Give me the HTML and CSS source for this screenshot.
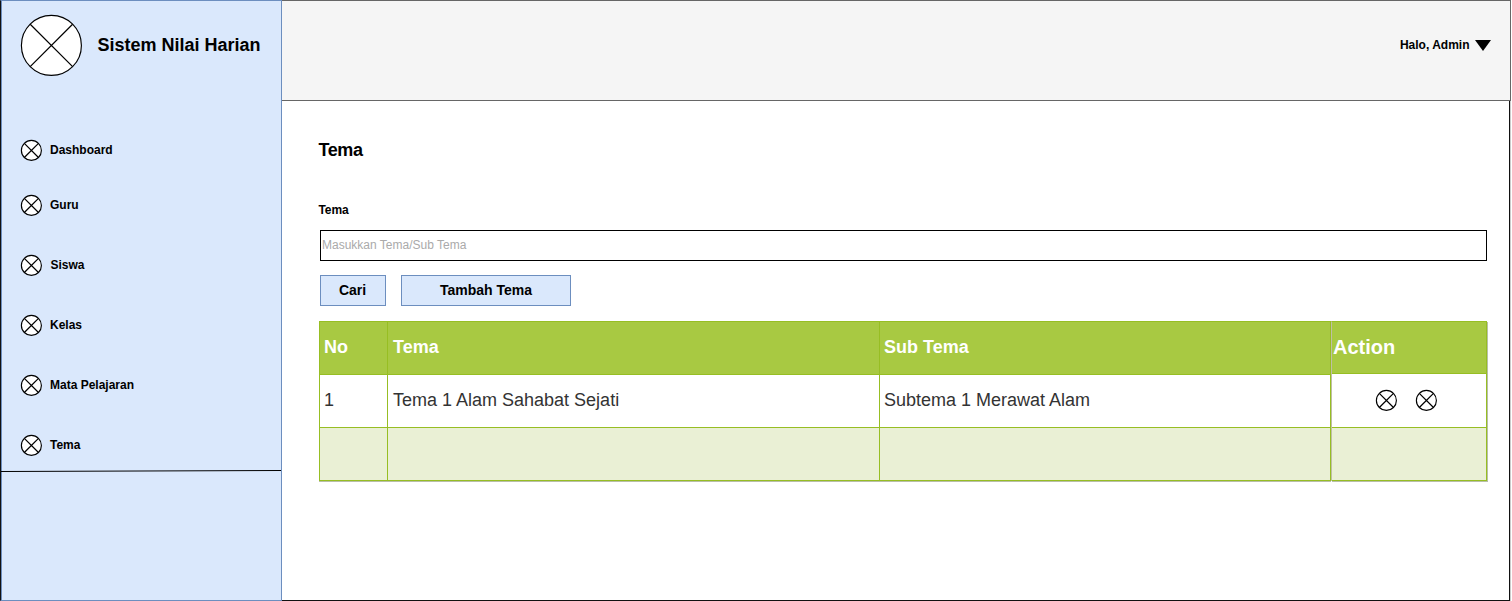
FILE: index.html
```html
<!DOCTYPE html>
<html lang="id">
<head>
<meta charset="utf-8">
<title>Sistem Nilai Harian</title>
<link rel="stylesheet" href="styles.css">
</head>
<body>
<svg class="defs" width="0" height="0">
  <symbol id="cross" viewBox="0 0 22 22">
    <circle cx="11.4" cy="11.4" r="10" fill="#fff" stroke="#000" stroke-width="1.15"/>
    <path d="M4.33 4.33 18.47 18.47M18.47 4.33 4.33 18.47" stroke="#000" stroke-width="1.25"/>
  </symbol>
</svg>
<div class="app">
  <aside class="sidebar">
    <div class="brand">
      <svg class="logo" viewBox="0 0 62 62"><circle cx="31.4" cy="31.4" r="30" fill="#fff" stroke="#000" stroke-width="1.15"/><path d="M10.2 10.2 52.6 52.6M52.6 10.2 10.2 52.6" stroke="#000" stroke-width="1.25"/></svg>
      <span>Sistem Nilai Harian</span>
    </div>
    <nav class="menu">
      <a class="item first"><svg class="icon"><use href="#cross"/></svg><span>Dashboard</span></a>
      <a class="item"><svg class="icon"><use href="#cross"/></svg><span>Guru</span></a>
      <a class="item siswa"><svg class="icon"><use href="#cross"/></svg><span>Siswa</span></a>
      <a class="item"><svg class="icon"><use href="#cross"/></svg><span>Kelas</span></a>
      <a class="item"><svg class="icon"><use href="#cross"/></svg><span>Mata Pelajaran</span></a>
      <a class="item"><svg class="icon"><use href="#cross"/></svg><span>Tema</span></a>
    </nav>
    <svg class="rule" viewBox="0 0 280 2"><path d="M0 1.5 280 .5" stroke="#000"/></svg>
  </aside>
  <div class="page">
    <header class="topbar">
      <span>Halo, Admin</span>
      <svg class="caret" viewBox="0 0 16 11"><path d="M0 0H16L8 11Z"/></svg>
    </header>
    <main class="content">
      <h1>Tema</h1>
      <label class="label">Tema</label>
      <div class="input">Masukkan Tema/Sub Tema</div>
      <div class="buttons">
        <div class="btn cari">Cari</div>
        <div class="btn tambah">Tambah Tema</div>
      </div>
      <div class="tables">
        <div class="grid">
          <div class="cell head">No</div><div class="cell head tema">Tema</div><div class="cell head">Sub Tema</div>
          <div class="cell">1</div><div class="cell tema">Tema 1 Alam Sahabat Sejati</div><div class="cell">Subtema 1 Merawat Alam</div>
          <div class="cell alt"></div><div class="cell alt"></div><div class="cell alt"></div>
        </div>
        <div class="grid action">
          <div class="cell head">Action</div>
          <div class="cell icons"><svg class="icon"><use href="#cross"/></svg><svg class="icon"><use href="#cross"/></svg></div>
          <div class="cell alt"></div>
        </div>
      </div>
    </main>
  </div>
</div>
</body>
</html>
```
FILE: styles.css
```css
* { box-sizing: border-box; }
body {
  margin: 0;
  background: #fff;
  color: #000;
  font: bold 12px/14px "Liberation Sans", Arial, sans-serif;
  overflow: hidden;
}
.defs { position: absolute; }
svg { display: block; flex: none; overflow: visible; }
.app { display: flex; width: 1512px; height: 601px; }
.sidebar {
  width: 282px;
  height: 601px;
  border: 1px solid #6c8ebf;
  box-shadow: inset 1px 0 #6c8ebf;
  border-left-color: #111;
  background: #dae8fc;
}
.brand {
  display: flex;
  align-items: center;
  gap: 15.5px;
  height: 62px;
  margin: 13px 0 0 19px;
  font-size: 18px;
  line-height: 22px;
}
.logo { width: 62px; height: 62px; }
.menu {
  display: flex;
  flex-direction: column;
  gap: 38px;
  padding: 63px 0 0 19px;
}
.item { display: flex; align-items: center; height: 22px; gap: 8px; }
.item.first { margin-bottom: -5px; }
.item.siswa span { margin-left: .5px; }
.icon { width: 22px; height: 22px; }
.rule { width: 280px; height: 2px; margin-top: 14px; }
.page { width: 1230px; height: 601px; }
.topbar {
  display: flex;
  justify-content: flex-end;
  align-items: flex-start;
  gap: 5px;
  width: 1229px;
  height: 101px;
  padding: 37px 19.5px 0 0;
  border: 1px solid #666;
  border-left: 0;
  background: #f5f5f5;
}
.caret { width: 16px; height: 11px; margin-top: 2px; }
.content {
  width: 1228px;
  height: 500px;
  padding: 38px 0 0 37px;
  border: solid #111;
  border-width: 0 1px 1px 0;
  box-shadow: 1px 0 #ccc;
}
h1 { margin: 0 0 0 -.5px; font-size: 18px; line-height: 22px; letter-spacing: -.4px; }
.label { display: block; margin: 42px 0 0 -.5px; letter-spacing: -.1px; }
.input {
  width: 1167px;
  height: 31px;
  margin: 13px 0 0 1px;
  padding: 7px 1px;
  border: 1px solid #000;
  color: #aaa;
  font-weight: normal;
}
.buttons { display: flex; gap: 15.5px; margin: 14px 0 0 .5px; }
.btn {
  height: 31px;
  border: 1px solid #6c8ebf;
  background: #dae8fc;
  font-size: 14px;
  line-height: 29px;
  text-align: center;
}
.cari { width: 66px; }
.tambah { width: 170px; }
.tables { display: flex; margin-top: 15px; }
.grid {
  display: grid;
  grid-template-columns: 68px 492px 451px;
  grid-template-rows: 53px 53px 53px;
  border: solid #97be23;
  border-width: 1px 0 0 1px;
  box-shadow: 0 1px #b8bfa8;
}
.cell {
  padding: 0 4px;
  border: solid #97be23;
  border-width: 0 1px 1px 0;
  color: #333;
  font-size: 18px;
  font-weight: normal;
  line-height: 50px;
}
.head { background: #a8c942; color: #fff; font-weight: bold; line-height: 51px; }
.tema { padding-left: 5px; }
.alt { background: #eaf0d5; }
.action {
  grid-template-columns: 155px;
  grid-template-rows: 52px 54px 53px;
  border-left-color: #bfbfa5;
  box-shadow: 1px 1px #b8bfa8;
}
.action .head { padding: 0 1px; font-size: 20px; }
.icons { display: flex; align-items: center; gap: 18px; padding: 0 0 1px 43px; }
```
